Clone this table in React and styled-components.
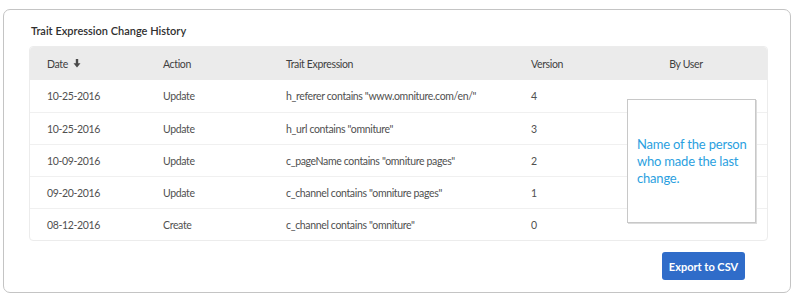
import styled, { createGlobalStyle } from 'styled-components'

const GlobalStyle = createGlobalStyle`
  body {
    margin: 0;
    background: #fff;
    font-family: Lato, 'Open Sans', 'Liberation Sans', sans-serif;
    color: #4b4b4b;
  }
`

const Page = styled.div`
  padding: 9px 9px 6px 3px;
`

const Card = styled.section`
  display: flex;
  flex-direction: column;
  height: 284px;
  box-sizing: border-box;
  border: 1px solid #c4c4c4;
  border-radius: 7px;
  padding: 13px 22px 12px 25px;
`

const Title = styled.h2`
  margin: 0 0 7px 2px;
  font-size: 11px;
  font-weight: 600;
  line-height: 16px;
  color: #2f2f2f;
`

const TableWrap = styled.div`
  position: relative;
  border: 1px solid #ececec;
  border-radius: 4px;
`

const Grid = styled.div`
  display: grid;
  grid-template-columns: 116px 123px 245px 91px 1fr;
`

const HeadRow = styled(Grid)`
  height: 33px;
  background: #ebebeb;
  border-radius: 4px 4px 0 0;
`

const Row = styled(Grid)`
  height: 32px;
  border-top: ${(p) => (p.$first ? 'none' : '1px solid #f0f0f0')};
  box-sizing: border-box;
`

const Cell = styled.div`
  display: flex;
  align-items: center;
  justify-content: ${(p) => (p.$center ? 'center' : 'flex-start')};
  padding-left: ${(p) => (p.$center ? '0' : '17px')};
  font-size: 10.5px;
  letter-spacing: -0.35px;
  color: ${(p) => (p.$head ? '#3f3f3f' : '#505050')};
  white-space: nowrap;
  gap: 5px;
`

const Note = styled.div`
  position: absolute;
  left: 597px;
  top: 52px;
  width: 129px;
  height: 124px;
  box-sizing: border-box;
  background: #fff;
  border: 1px solid #c8c8c8;
  box-shadow: 1px 1px 0 #dcdcdc;
  display: flex;
  align-items: center;
  padding: 0 4px 0 9px;
  font-size: 13px;
  letter-spacing: -0.2px;
  line-height: 17px;
  color: #2b9fe0;
  white-space: nowrap;
`

const Footer = styled.div`
  display: flex;
  justify-content: flex-end;
  margin-top: auto;
  padding-right: 23px;
`

const Button = styled.button`
  width: 83px;
  height: 28px;
  padding: 0;
  border: none;
  border-radius: 3px;
  background: #2f6cc9;
  color: #fff;
  font-family: inherit;
  font-size: 11px;
  font-weight: 700;
  white-space: nowrap;
`

const SortArrow = () => (
  <svg width="8" height="9" viewBox="0 0 8 9">
    <rect x="2.8" y="0" width="2.4" height="5" fill="#4a4a4a" />
    <path d="M0.5 4.2 H7.5 L4 8.5 Z" fill="#4a4a4a" />
  </svg>
)

const rows = [
  ['10-25-2016', 'Update', 'h_referer contains "www.omniture.com/en/"', '4'],
  ['10-25-2016', 'Update', 'h_url contains "omniture"', '3'],
  ['10-09-2016', 'Update', 'c_pageName contains "omniture pages"', '2'],
  ['09-20-2016', 'Update', 'c_channel contains "omniture pages"', '1'],
  ['08-12-2016', 'Create', 'c_channel contains "omniture"', '0'],
]

export default function App() {
  return (
    <>
      <GlobalStyle />
      <Page>
        <Card>
          <Title>Trait Expression Change History</Title>
          <TableWrap>
            <HeadRow>
              <Cell $head>
                Date <SortArrow />
              </Cell>
              <Cell $head>Action</Cell>
              <Cell $head>Trait Expression</Cell>
              <Cell $head>Version</Cell>
              <Cell $head $center>By User</Cell>
            </HeadRow>
            {rows.map((r, i) => (
              <Row key={i} $first={i === 0}>
                <Cell>{r[0]}</Cell>
                <Cell>{r[1]}</Cell>
                <Cell>{r[2]}</Cell>
                <Cell>{r[3]}</Cell>
                <Cell />
              </Row>
            ))}
            <Note>
              <span>
                Name of the person
                <br />
                who made the last
                <br />
                change.
              </span>
            </Note>
          </TableWrap>
          <Footer>
            <Button>Export to CSV</Button>
          </Footer>
        </Card>
      </Page>
    </>
  )
}
